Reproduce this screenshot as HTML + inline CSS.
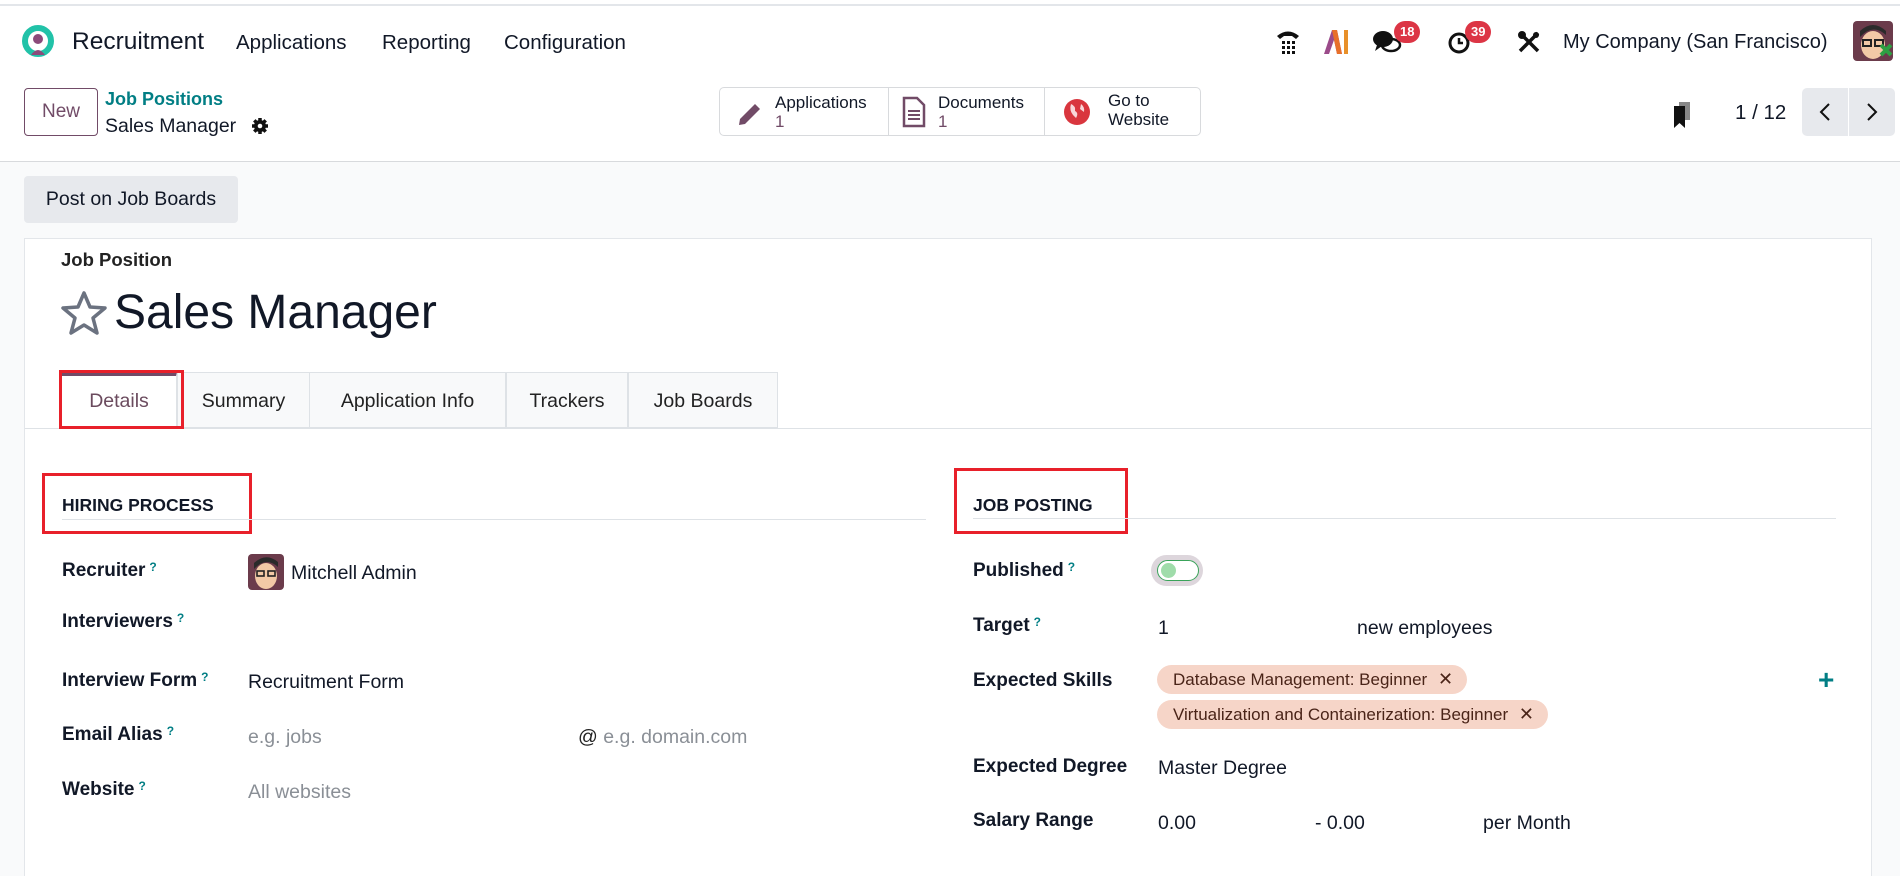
<!DOCTYPE html>
<html><head><meta charset="utf-8"><style>
*{box-sizing:border-box;margin:0;padding:0}
html{width:1900px;height:876px;overflow:hidden}
body{width:1900px;height:876px;overflow:hidden;font-family:"Liberation Sans",sans-serif;color:#111827;background:#f9fafb;position:relative}
.abs{position:absolute;white-space:nowrap}
.nav{position:absolute;left:0;top:0;width:1900px;height:162px;background:#fff;border-bottom:1px solid #d8dadd}
.topline{position:absolute;left:0;top:4px;width:1900px;height:2px;background:#e3e6ea}
.m{font-size:20.5px;top:31px}
.badge{position:absolute;background:#dc3545;color:#fff;font-size:13px;border-radius:11px;height:22px;line-height:22px;padding:0 6px;font-weight:bold}
.btn-new{left:24px;top:88px;width:74px;height:48px;border:1px solid #714b67;border-radius:4px;font-size:19px;color:#714b67;text-align:center;line-height:46px;background:#fff}
.smart{position:absolute;left:719px;top:87px;width:482px;height:49px;border:1px solid #d8dadd;border-radius:5px;background:#fff}
.smart div{position:absolute;top:0;height:47px;font-size:17px;line-height:19px;padding-top:5px}
.pager{position:absolute;left:1802px;top:88px;width:93px;height:48px;background:#e7e9ed;border-radius:5px}
.post{left:24px;top:176px;width:214px;height:47px;background:#e7e9ed;border-radius:4px;font-size:19.5px;line-height:47px;text-align:center}
.sheet{position:absolute;left:24px;top:238px;width:1848px;height:660px;background:#fff;border:1px solid #e3e6ea}
.tab{position:absolute;top:372px;height:56px;border:1px solid #dee2e6;background:#f8f9fa;font-size:19.5px;line-height:56px;text-align:center;color:#222}
.red{position:absolute;border:3px solid #e8202a}
.lbl{font-size:19px;font-weight:bold;color:#111827}
.q{color:#017e84;font-size:12px;vertical-align:top;margin-left:4px}
.val{font-size:19.5px}
.ph{font-size:19.5px;color:#8a8f96}
.sec{font-size:17.5px;font-weight:bold}
.hr{position:absolute;height:1px;background:#dee2e6}
.tag{position:absolute;left:1157px;height:29px;background:#f6d5c8;border-radius:15px;font-size:17px;line-height:29px;padding:0 14px 0 16px;color:#4a2418}
</style></head><body>
<div class="nav"></div>
<div class="topline"></div>
<svg class="abs" style="left:22px;top:25px" width="34" height="34" viewBox="0 0 34 34"><circle cx="16" cy="16" r="13" fill="none" stroke="#21c2a8" stroke-width="6"/><circle cx="16" cy="14" r="5" fill="#8b4a7a"/><path d="M9 30 Q16 20 23 30Z" fill="#8b4a7a"/></svg>
<div class="abs" style="left:72px;top:28px;font-size:24.5px">Recruitment</div>
<div class="abs m" style="left:236px">Applications</div>
<div class="abs m" style="left:382px">Reporting</div>
<div class="abs m" style="left:504px">Configuration</div>
<svg class="abs" style="left:1275px;top:28px" width="26" height="28" viewBox="0 0 26 28"><path d="M2 8 Q13 -1 24 8 L21 11 L17 8 L9 8 L5 11Z" fill="#111"/><g fill="#111"><rect x="7" y="13" width="3" height="3"/><rect x="12" y="13" width="3" height="3"/><rect x="17" y="13" width="3" height="3"/><rect x="7" y="18" width="3" height="3"/><rect x="12" y="18" width="3" height="3"/><rect x="17" y="18" width="3" height="3"/><rect x="7" y="23" width="3" height="3"/><rect x="12" y="23" width="3" height="3"/><rect x="17" y="23" width="3" height="3"/></g></svg>
<svg class="abs" style="left:1324px;top:30px" width="26" height="24" viewBox="0 0 26 24"><path d="M0 24 L8 0 L13 0 L18 24 L13 24 L10 10 L5 24Z" fill="#9b4b8a"/><path d="M8 0 L13 0 L18 24 L13 24Z" fill="#e8702a"/><rect x="20" y="0" width="4" height="24" fill="#e8902a"/></svg>
<svg class="abs" style="left:1372px;top:29px" width="30" height="26" viewBox="0 0 30 26"><ellipse cx="11" cy="10" rx="10" ry="8" fill="#111"/><path d="M5 16 L3 22 L10 17Z" fill="#111"/><ellipse cx="19" cy="16" rx="9" ry="6" fill="none" stroke="#111" stroke-width="2.5"/></svg>
<div class="badge" style="left:1394px;top:21px">18</div>
<svg class="abs" style="left:1447px;top:29px" width="26" height="26" viewBox="0 0 26 26"><circle cx="12" cy="14" r="9" fill="none" stroke="#111" stroke-width="3"/><path d="M12 9 V14 H16" stroke="#111" stroke-width="2.5" fill="none"/></svg>
<div class="badge" style="left:1465px;top:21px">39</div>
<svg class="abs" style="left:1517px;top:30px" width="24" height="24" viewBox="0 0 24 24"><path d="M3 3 L21 21 M21 3 L3 21" stroke="#111" stroke-width="3.5"/><circle cx="5" cy="5" r="4" fill="#111"/><circle cx="19" cy="5" r="3" fill="#111"/></svg>
<div class="abs" style="left:1563px;top:31px;font-size:20px">My Company (San Francisco)</div>
<svg class="abs" style="left:1853px;top:21px" width="40" height="40" viewBox="0 0 40 40"><rect width="40" height="40" rx="4" fill="#6b3b4b"/><ellipse cx="20" cy="24" rx="12" ry="14" fill="#f2c9a6"/><path d="M7 16 Q20 2 33 14 L33 10 Q20 -2 7 10Z" fill="#2a2a2a"/><rect x="10" y="19" width="8" height="6" fill="none" stroke="#222" stroke-width="2"/><rect x="22" y="19" width="8" height="6" fill="none" stroke="#222" stroke-width="2"/><path d="M28 34 L38 24 M28 24 L38 34" stroke="#2ea043" stroke-width="4"/></svg>
<div class="abs btn-new">New</div>
<div class="abs" style="left:105px;top:89px;font-size:18px;color:#017e84;font-weight:bold">Job Positions</div>
<div class="abs" style="left:105px;top:115px;font-size:19.5px">Sales Manager</div>
<svg class="abs" style="left:251px;top:117px" width="18" height="18" viewBox="0 0 18 18"><circle cx="9" cy="9" r="6" fill="#111"/><g stroke="#111" stroke-width="3.5"><path d="M9 1V17M1 9H17M3.3 3.3L14.7 14.7M14.7 3.3L3.3 14.7"/></g><circle cx="9" cy="9" r="2.3" fill="#fff"/></svg>
<div class="smart">
<svg class="abs" style="left:16px;top:12px" width="28" height="28" viewBox="0 0 28 28"><path d="M4 19 L19 4 L24 9 L9 24 L3 25Z" fill="#714b67"/></svg>
<div style="left:55px">Applications<br><span style="color:#714b67">1</span></div>
<div style="left:168px;width:1px;background:#d8dadd;padding:0"></div>
<svg class="abs" style="left:182px;top:8px" width="24" height="32" viewBox="0 0 24 32"><path d="M2 2 H15 L22 9 V30 H2Z" fill="none" stroke="#714b67" stroke-width="2.5"/><path d="M6 15H18M6 19H18M6 23H18" stroke="#714b67" stroke-width="2"/></svg>
<div style="left:218px">Documents<br><span style="color:#714b67">1</span></div>
<div style="left:324px;width:1px;background:#d8dadd;padding:0"></div>
<svg class="abs" style="left:343px;top:10px" width="28" height="28" viewBox="0 0 28 28"><circle cx="14" cy="14" r="13" fill="#d9363e"/><path d="M8 6 Q13 8 12 13 Q16 15 13 20 L10 17 Q6 12 8 6Z M18 6 Q22 9 21 14 L17 11Z" fill="#fff" opacity=".8"/></svg>
<div style="left:388px;padding-top:3px">Go to<br>Website</div>
</div>
<svg class="abs" style="left:1670px;top:100px" width="24" height="30" viewBox="0 0 24 30"><rect x="9" y="2" width="11" height="18" fill="#888"/><path d="M4 6 H15 V28 L9.5 23 L4 28Z" fill="#111"/></svg>
<div class="abs" style="left:1735px;top:101px;font-size:20.5px">1 / 12</div>
<div class="pager"><div style="position:absolute;left:46px;top:0;width:1px;height:48px;background:#fff"></div>
<svg class="abs" style="left:16px;top:14px" width="14" height="20"><path d="M11 2 L3 10 L11 18" stroke="#111" stroke-width="2" fill="none"/></svg>
<svg class="abs" style="left:63px;top:14px" width="14" height="20"><path d="M3 2 L11 10 L3 18" stroke="#111" stroke-width="2" fill="none"/></svg></div>
<div class="abs post">Post on Job Boards</div>
<div class="sheet" style="height:640px"></div>
<div class="abs" style="left:61px;top:249px;font-size:18.5px;font-weight:bold;color:#222">Job Position</div>
<svg class="abs" style="left:60px;top:290px" width="48" height="46" viewBox="0 0 48 46"><path d="M24 3 L30 17 L45 18 L33 28 L37 43 L24 35 L11 43 L15 28 L3 18 L18 17Z" fill="none" stroke="#6b7280" stroke-width="3.5" stroke-linejoin="round"/></svg>
<div class="abs" style="left:114px;top:285px;font-size:48px">Sales Manager</div>
<div class="hr" style="left:25px;top:428px;width:1846px"></div>
<div class="tab" style="left:61px;width:116px;background:#fff;border-bottom-color:#fff;border-top:4px solid #714b67;line-height:50px;color:#6b4b5e">Details</div>
<div class="tab" style="left:177px;width:133px">Summary</div>
<div class="tab" style="left:309px;width:197px">Application Info</div>
<div class="tab" style="left:506px;width:122px">Trackers</div>
<div class="tab" style="left:628px;width:150px">Job Boards</div>
<div class="red" style="left:59px;top:370px;width:125px;height:59px"></div>
<div class="red" style="left:42px;top:473px;width:210px;height:61px"></div>
<div class="red" style="left:954px;top:468px;width:174px;height:66px"></div>
<div class="abs sec" style="left:62px;top:495px">HIRING PROCESS</div>
<div class="hr" style="left:62px;top:519px;width:864px"></div>
<div class="abs sec" style="left:973px;top:495px">JOB POSTING</div>
<div class="hr" style="left:973px;top:518px;width:863px"></div>
<div class="abs lbl" style="left:62px;top:560px">Recruiter<span class="q">?</span></div>
<svg class="abs" style="left:248px;top:554px" width="36" height="36" viewBox="0 0 36 36"><rect width="36" height="36" rx="4" fill="#6b3b4b"/><ellipse cx="18" cy="22" rx="11" ry="13" fill="#f2c9a6"/><path d="M6 15 Q18 2 30 13 L30 8 Q18 -2 6 9Z" fill="#2a2a2a"/><rect x="9" y="17" width="7" height="5" fill="none" stroke="#222" stroke-width="1.6"/><rect x="20" y="17" width="7" height="5" fill="none" stroke="#222" stroke-width="1.6"/></svg>
<div class="abs val" style="left:291px;top:562px">Mitchell Admin</div>
<div class="abs lbl" style="left:62px;top:611px">Interviewers<span class="q">?</span></div>
<div class="abs lbl" style="left:62px;top:670px">Interview Form<span class="q">?</span></div>
<div class="abs val" style="left:248px;top:671px">Recruitment Form</div>
<div class="abs lbl" style="left:62px;top:724px">Email Alias<span class="q">?</span></div>
<div class="abs ph" style="left:248px;top:726px">e.g. jobs</div>
<div class="abs ph" style="left:578px;top:726px"><span style="color:#222">@</span> e.g. domain.com</div>
<div class="abs lbl" style="left:62px;top:779px">Website<span class="q">?</span></div>
<div class="abs ph" style="left:248px;top:781px">All websites</div>
<div class="abs lbl" style="left:973px;top:560px">Published<span class="q">?</span></div>
<div class="abs" style="left:1151px;top:555px;width:52px;height:31px;border-radius:16px;background:#ddd6dc"></div>
<div class="abs" style="left:1157px;top:560px;width:42px;height:21px;border-radius:11px;background:#fff;border:1.5px solid #3aa35a"></div>
<div class="abs" style="left:1161px;top:563px;width:15px;height:15px;border-radius:50%;background:#9fdcaa"></div>
<div class="abs lbl" style="left:973px;top:615px">Target<span class="q">?</span></div>
<div class="abs val" style="left:1158px;top:617px">1</div>
<div class="abs val" style="left:1357px;top:617px">new employees</div>
<div class="abs lbl" style="left:973px;top:670px">Expected Skills</div>
<div class="tag" style="top:665px">Database Management: Beginner <span style="margin-left:6px;font-size:18px">✕</span></div>
<div class="tag" style="top:700px">Virtualization and Containerization: Beginner <span style="margin-left:6px;font-size:18px">✕</span></div>
<div class="abs" style="left:1818px;top:664px;font-size:28px;font-weight:bold;color:#017e84">+</div>
<div class="abs lbl" style="left:973px;top:756px">Expected Degree</div>
<div class="abs val" style="left:1158px;top:757px">Master Degree</div>
<div class="abs lbl" style="left:973px;top:810px">Salary Range</div>
<div class="abs val" style="left:1158px;top:812px">0.00</div>
<div class="abs val" style="left:1315px;top:812px">- 0.00</div>
<div class="abs val" style="left:1483px;top:812px">per Month</div>
</body></html>
